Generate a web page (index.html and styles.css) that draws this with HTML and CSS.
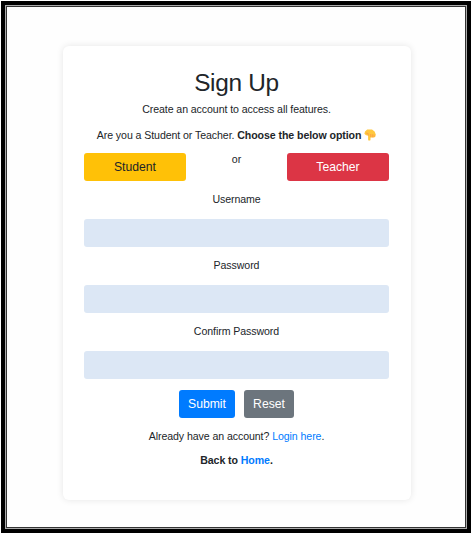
FILE: index.html
```
<!DOCTYPE html>
<html lang="en">
<head>
<meta charset="utf-8">
<title>Sign Up</title>
<link rel="stylesheet" href="styles.css">
</head>
<body>
<div class="frame">
  <div class="page">
    <main class="card">
      <h2 class="title">Sign Up</h2>
      <p class="intro">Create an account to access all features.</p>
      <p class="question">Are you a Student or Teacher. <b>Choose the below option</b>
        <svg class="hand" viewBox="0 0 12 12" aria-hidden="true">
          <path fill="#ffc83f" d="M3.2 .6H8l2.6 1.8 1.2 3-.5 2.4-1.5.8-3.3-.2v2a1.2 1.2 0 0 1-2.4 0V6.6L2 6.2.4 4.8 1 2.4z"/>
          <path fill="none" stroke="#fb9a48" stroke-width=".8" d="M2 4l2.2.6v2.2M6.7 5v3.2M8.4 5.3v3M10 5.6v2.6"/>
        </svg>
      </p>
      <div class="roles">
        <button class="btn student">Student</button>
        <span>or</span>
        <button class="btn teacher">Teacher</button>
      </div>
      <form>
        <label class="field"><span>Username</span><input type="text"></label>
        <label class="field"><span>Password</span><input type="password"></label>
        <label class="field"><span>Confirm Password</span><input type="password"></label>
        <div class="actions">
          <button class="btn submit" type="button">Submit</button>
          <button class="btn reset" type="button">Reset</button>
        </div>
      </form>
      <p class="login">Already have an account? <a href="#">Login here</a>.</p>
      <p class="back">Back to <a href="#">Home</a>.</p>
    </main>
  </div>
</div>
</body>
</html>
```
FILE: styles.css
```
* { box-sizing: border-box; }
body {
  margin: 0;
  height: 534px;
  padding: 1px 1px 1px;
  background: #fff;
  font: 10.6px/16px "Liberation Sans", Arial, sans-serif;
  letter-spacing: -.08px;
  color: #212529;
  overflow: hidden;
}
.frame { height: 532px; border: 4px solid #000; background: #aaa; padding: 1px; }
.page { height: 100%; border: 1px solid #333; background: #fefefe; padding: 39px 54px 0 56px; }
.card {
  width: 348px;
  height: 454px;
  padding: 20px 22px 0 21px;
  border-radius: 6px;
  background: #fff;
  box-shadow: 0 0 7px rgba(0, 0, 0, .1);
  text-align: center;
}
p { margin: 0; }
.title { margin: 0 0 1px; font-size: 24.4px; line-height: 34px; font-weight: 400; letter-spacing: -.3px; }
.question { margin-top: 10px; }
.hand { width: 12px; height: 12px; vertical-align: -2px; }
.roles { display: flex; justify-content: space-between; margin-top: 10px; height: 28px; }
.roles span { margin-top: -2px; }
.btn { height: 28px; padding: 0; border: 0; border-radius: 3px; font: 12.2px "Liberation Sans", Arial, sans-serif; letter-spacing: 0; color: #fff; }
.student, .teacher { width: 102px; }
.student { background: #ffc107; color: #212529; }
.teacher { background: #dc3545; }
.field { display: block; height: 66px; padding-top: 10px; }
.field input { display: block; width: 100%; height: 28px; margin: 12px 0 0; border: 0; border-radius: 3px; background: #dce7f5; }
.actions { display: flex; justify-content: center; gap: 9px; margin-top: 11px; }
.submit { width: 56px; background: #007bff; }
.reset { width: 50px; background: #6c757d; }
.login { margin-top: 10px; }
.back { margin-top: 8px; font-weight: 700; }
a { color: #007bff; text-decoration: none; }
```
